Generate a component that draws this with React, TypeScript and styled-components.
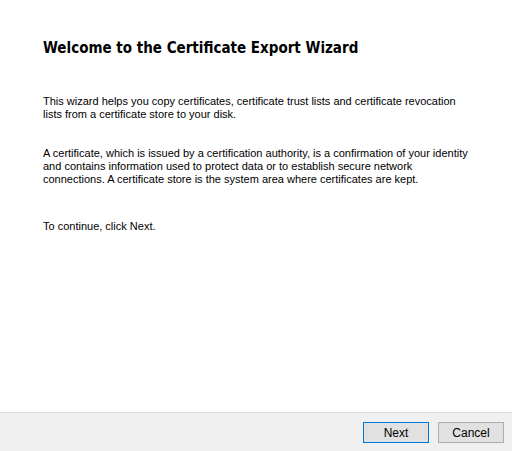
import React from 'react';
import styled, { createGlobalStyle } from 'styled-components';

const GlobalStyle = createGlobalStyle`
  html, body {
    margin: 0;
    padding: 0;
    background: #ffffff;
  }
  #root {
    height: 451px;
  }
`;

const Wizard = styled.div`
  display: flex;
  flex-direction: column;
  height: 451px;
  width: 512px;
  overflow: hidden;
  font-family: "Liberation Sans", Arial, sans-serif;
  color: #000000;
`;

const Body = styled.main`
  flex: 1;
  display: flex;
  flex-direction: column;
  background: #ffffff;
  padding: 39px 20px 0 43px;
`;

const Title = styled.h1`
  margin: 0 0 38px;
  font-family: "DejaVu Sans Condensed", "DejaVu Sans", sans-serif;
  font-weight: bold;
  font-size: 15px;
  line-height: 18px;
  white-space: nowrap;
`;

const Paragraph = styled.p<{ $gap?: number }>`
  margin: 0 0 ${(p) => p.$gap ?? 0}px;
  font-size: 11px;
  line-height: 13px;
  white-space: nowrap;
`;

const Footer = styled.footer`
  flex: 0 0 auto;
  display: flex;
  justify-content: flex-end;
  gap: 9px;
  padding: 9px 8px 8px;
  background: #f0f0f0;
  border-top: 1px solid #dfdfdf;
`;

const Button = styled.button<{ $primary?: boolean }>`
  width: 66px;
  height: 21px;
  padding: 0;
  background: #e1e1e1;
  border: 1px solid ${(p) => (p.$primary ? '#0078d7' : '#adadad')};
  border-radius: 0;
  font-family: "Liberation Sans", Arial, sans-serif;
  font-size: 12px;
  color: #000000;
  cursor: pointer;
`;

export default function App() {
  return (
    <>
      <GlobalStyle />
      <Wizard>
        <Body>
          <Title>Welcome to the Certificate Export Wizard</Title>
          <Paragraph $gap={26}>
            This wizard helps you copy certificates, certificate trust lists and certificate revocation
            <br />
            lists from a certificate store to your disk.
          </Paragraph>
          <Paragraph $gap={34}>
            A certificate, which is issued by a certification authority, is a confirmation of your identity
            <br />
            and contains information used to protect data or to establish secure network
            <br />
            connections. A certificate store is the system area where certificates are kept.
          </Paragraph>
          <Paragraph>To continue, click Next.</Paragraph>
        </Body>
        <Footer>
          <Button $primary>Next</Button>
          <Button>Cancel</Button>
        </Footer>
      </Wizard>
    </>
  );
}
